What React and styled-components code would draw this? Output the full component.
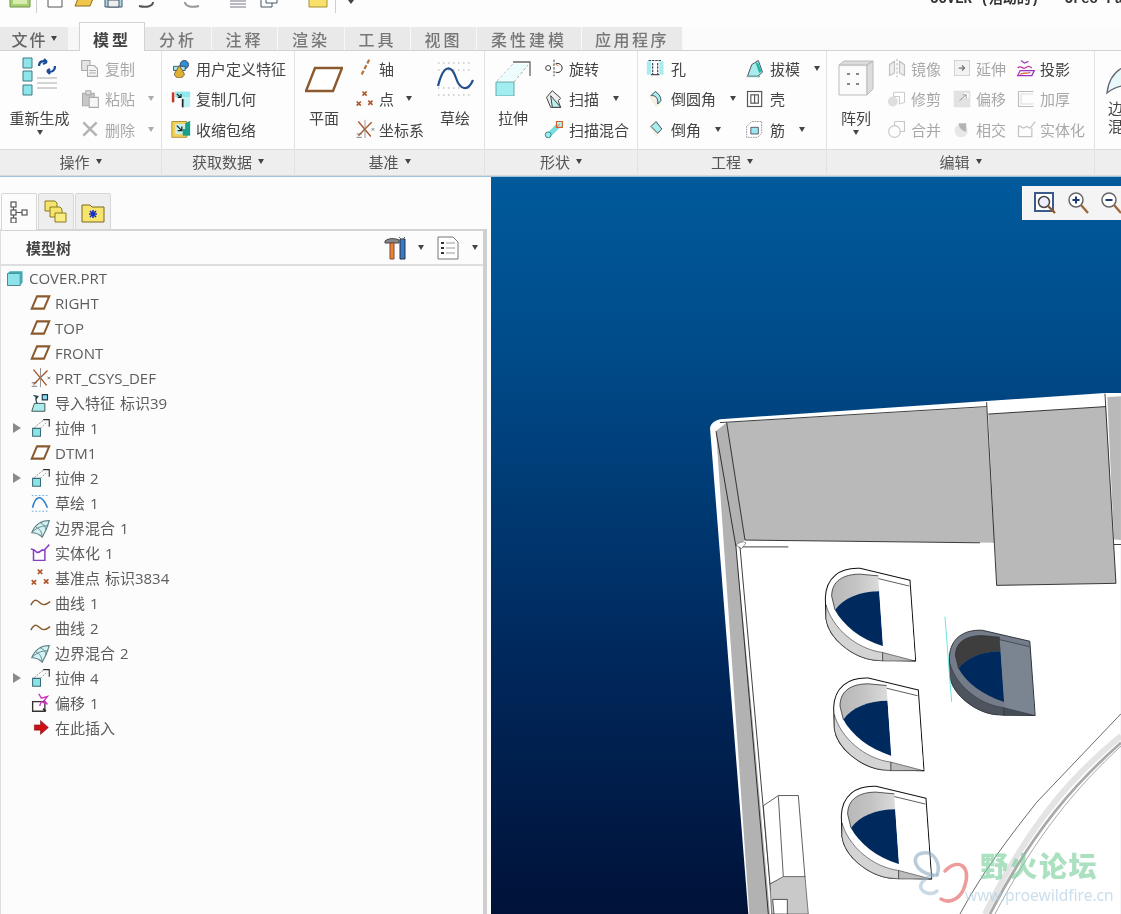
import React from 'react';
import styled, { createGlobalStyle } from 'styled-components';

const Global = createGlobalStyle`
  html, body { margin: 0; padding: 0; background: #fdfdfd; overflow: hidden; }
  body { font-family: "Noto Sans CJK SC", "Noto Sans", sans-serif; }
`;

const Page = styled.div`
  width: 1121px; height: 914px; overflow: hidden; display: flex; flex-direction: column;
  background: #fdfdfd; color: #444; filter: blur(0.45px);
`;

/* ---------- quick bar ---------- */
const QuickBar = styled.div`
  height: 27px; flex: none; display: flex; align-items: flex-start; overflow: hidden; position: relative;
`;
const QuickIcon = styled.svg`
  flex: none; width: ${p => p.$w}px; height: 22px; margin-top: -14px; margin-left: ${p => p.$ml}px;
`;
const QuickSep = styled.div`
  flex: none; width: 1px; height: 13px; background: #cfcfcf; margin-left: ${p => p.$ml}px;
`;
const Title = styled.div`
  margin-left: auto; margin-top: -12px; white-space: nowrap; font-size: 14px; line-height: 22px;
  font-weight: 700; color: #333; width: 191px; overflow: hidden; font-family: "Liberation Mono", "Noto Sans CJK SC", monospace;
`;
const QuickCaret = styled.span`
  flex: none; margin-left: 12px; width: 0; height: 0; margin-top: 0;
  border-left: 3px solid transparent; border-right: 3px solid transparent; border-top: 4px solid #444;
`;

/* ---------- tabs ---------- */
const TabBar = styled.div`
  height: 24px; box-sizing: border-box; flex: none; display: flex; align-items: stretch; background: #fbfbfb; border-bottom: 1px solid #d2d2d2;
`;
const FileTab = styled.div`
  width: 68px; flex: none; display: flex; align-items: center; justify-content: center; gap: 3px;
  background: #e9e9e9; font-size: 16px; font-weight: 500; color: #666; letter-spacing: 2px;
`;
const TabFill = styled.div`
  width: 11px; flex: none; background: #f7f7f7;
`;
const ActiveTab = styled.div`
  width: 66px; flex: none; margin-top: -5px; margin-bottom: -1px; background: #fdfdfd; border: 1px solid #d2d2d2; border-bottom: 0;
  box-sizing: border-box; display: flex; align-items: center; justify-content: center; padding-top: 3px;
  font-size: 16px; font-weight: 700; color: #444; letter-spacing: 3px; z-index: 2;
`;
const Tab = styled.div`
  width: ${p => p.$w}px; flex: none; box-sizing: border-box; background: #e9e9e9; border-right: 1px solid #f8f8f8;
  display: flex; align-items: center; justify-content: center; font-size: 16px; font-weight: 500; color: #777; letter-spacing: ${p => p.$ls}px;
`;

/* ---------- ribbon ---------- */
const Ribbon = styled.div`
  height: 125px; flex: none; display: flex; overflow: hidden;
`;
const Group = styled.div`
  flex: none; width: ${p => p.$w}px; display: flex; flex-direction: column; box-sizing: border-box;
  border-right: 1px solid #e2e2e2;
`;
const GroupBody = styled.div`
  height: 98px; flex: none; display: flex; padding: 2px 0 0 ${p => p.$pl}px; box-sizing: border-box; overflow: hidden;
`;
const GroupLabel = styled.div`
  height: 27px; flex: none; box-sizing: border-box; background: #eeeeee; border-top: 1px solid #dcdcdc; border-bottom: 1px solid #d8d8d8;
  display: flex; align-items: center; justify-content: center; gap: 6px; font-size: 15px; color: #555; padding-bottom: 3px;
`;
const Big = styled.div`
  width: ${p => p.$w}px; flex: none; margin-right: ${p => p.$mr}px; display: flex; flex-direction: column; align-items: center;
  font-size: 15px; line-height: 20px; color: #444;
`;
const BigIcon = styled.svg`
  width: ${p => p.$w}px; height: ${p => p.$h}px; margin-top: ${p => p.$mt}px; flex: none; display: block;
`;
const BigLabel = styled.div`
  white-space: nowrap; height: 22px; margin-top: ${p => p.$mt}px;
`;
const ClippedGroupText = styled.div`
  flex: none; width: 40px; padding-left: 3px; font-size: 15px; line-height: 18px; color: #444; margin-top: 4px;
`;
const ClippedBig = styled.div`
  width: 30px; flex: none; display: flex; flex-direction: column;
`;
const Col = styled.div`
  flex: none; width: ${p => p.$w}px; display: flex; flex-direction: column;
`;
const Row = styled.div`
  height: 30.5px; flex: none; display: flex; align-items: center; gap: ${p => p.$gap ?? 5}px; white-space: nowrap;
  font-size: 15px; color: ${p => p.$off ? '#a8a8a8' : '#444'};
`;
const Caret = styled.span`
  display: inline-block; flex: none; width: 0; height: 0;
  border-left: 3.5px solid transparent; border-right: 3.5px solid transparent;
  border-top: 5px solid ${p => p.$off ? '#aaa' : '#444'};
  margin-left: ${p => p.$ml ?? 0}px;
`;
const Ic = styled.svg`
  width: ${p => p.$s ?? 20}px; height: ${p => p.$s ?? 20}px; flex: none; display: block; margin-left: ${p => p.$ml ?? 0}px;
`;

/* ---------- main ---------- */
const Main = styled.div`
  flex: 1; display: flex; min-height: 0; border-top: 1px solid #9cc3dc;
`;
const Side = styled.aside`
  width: 491px; flex: none; background: #fcfcfc; padding-top: 16px; box-sizing: border-box; display: flex; flex-direction: column;
`;
const SideTabs = styled.div`
  display: flex; height: 37px; flex: none; padding-left: 1px; gap: 1px; margin-bottom: -1px; z-index: 1;
`;
const SideTab = styled.div`
  width: 36px; box-sizing: border-box; display: flex; align-items: center; justify-content: center;
  border: 1px solid #d6d6d6; border-radius: 2px 2px 0 0;
  background: ${p => p.$on ? '#fcfcfc' : '#eeeeee'};
  border-bottom: ${p => p.$on ? '0' : '1px solid #d6d6d6'};
`;
const TreePanel = styled.div`
  flex: 1; width: 487px; box-sizing: border-box; border-top: 2px solid #d4d4d4; border-left: 1px solid #dedede;
  border-right: 4px solid #cfcfcf; display: flex; flex-direction: column;
`;
const TreeHead = styled.div`
  height: 33px; flex: none; display: flex; align-items: center; padding: 0 5px 0 25px; border-bottom: 2px solid #dedede;
  font-size: 15px; font-weight: 700; color: #444;
`;
const HeadTools = styled.div`
  margin-left: auto; display: flex; align-items: center;
`;
const Tree = styled.div`
  margin-top: -1px; display: flex; flex-direction: column;
`;
const TreeRow = styled.div`
  height: 25px; display: flex; align-items: center; flex: none; white-space: nowrap;
  padding-left: ${p => p.$root ? 5 : 12}px; font-size: 15px; color: #5c5c5c;
  font-family: "Open Sans", "Noto Sans CJK SC", sans-serif; word-spacing: 1px;
`;
const Toggle = styled.span`
  width: 17px; flex: none; display: flex;
  &::before {
    content: ""; display: ${p => p.$show ? 'block' : 'none'}; width: 0; height: 0;
    border-top: 5px solid transparent; border-bottom: 5px solid transparent; border-left: 8px solid #8a8a8a;
  }
`;
const TreeText = styled.span`
  margin-left: ${p => p.$root ? 5 : 4}px;
`;

const Canvas = styled.main`
  flex: 1; position: relative; overflow: hidden; min-width: 0;
  background: linear-gradient(180deg, #005a9c 0%, #004a88 25%, #00285c 65%, #001238 100%);
`;
const Scene = styled.svg`
  width: 100%; height: 100%; display: block;
`;
const ViewBar = styled.div`
  position: absolute; top: 9px; left: 531px; width: 110px; height: 34px; background: #f4f4f4;
  display: flex; align-items: center; padding-left: 10px; gap: 9px; box-sizing: border-box; border-left: 1px solid #fff;
`;
const WatermarkCn = styled.div`
  position: absolute; left: 489px; top: 672px; font-family: "Noto Sans CJK SC", serif; font-size: 28px; font-weight: 900;
  line-height: 32px; letter-spacing: 1.5px; color: rgba(120, 205, 155, 0.62); white-space: nowrap;
`;
const WatermarkEn = styled.div`
  position: absolute; left: 474px; top: 707px; font-family: "Noto Sans", sans-serif; font-size: 15.5px; line-height: 22px;
  color: rgba(175, 205, 225, 0.65); white-space: nowrap;
`;
const Logo = styled.svg`
  position: absolute; left: 420px; top: 672px; width: 60px; height: 58px;
`;

/* ---------- icons ---------- */
const B = '#8a5a2e';
const P = {
  plane: <path d="M8 5H22L16 19H2Z" fill="#fff" stroke={B} strokeWidth="2.3" />,
  axis: <path d="M17 2L7 22" stroke="#b0703a" strokeWidth="2.6" strokeDasharray="5 2.5" fill="none" />,
  point: <g stroke="#b0562a" strokeWidth="2" fill="none"><path d="M9 3l5 5M14 3l-5 5M2 15l5 5M7 15l-5 5M16 14l5 5M21 14l-5 5" /></g>,
  csys: <g fill="none"><path d="M4 3L19 21M20 4L4 20" stroke="#a8552a" strokeWidth="1.6" /><path d="M12 1V23" stroke="#888" strokeWidth="1" /><path d="M20 11l3 3M23 11l-3 3M2 18h6M2 22h6" stroke="#666" strokeWidth="1" /></g>,
  userfeat: <g><circle cx="16" cy="8" r="5" fill="#2f8fd8" stroke="#234" /><path d="M3 10h14v5H3z" fill="#9fe6ea" stroke="#345" /><path d="M10 9l-6 10a6 5 0 0 0 12 0z" fill="#e0b030" stroke="#654" /></g>,
  copygeo: <g><path d="M5 3h18v7H5z" fill="#8fe8ea" /><path d="M13 10h10v12H13z" fill="#b8f2f2" /><path d="M1 4h3v12H1z" fill="#c0392b" /><path d="M7 6l5 4m0-4v4H8" stroke="#222" strokeWidth="1.4" fill="none" /><path d="M14 12v10" stroke="#222" strokeWidth="2" /></g>,
  shrink: <g><path d="M1 3h18v19H1z" fill="#f2d060" stroke="#a88320" /><path d="M5 6h12v12H5z" fill="#c8f0e8" /><path d="M17 5l6-3v10h-6z" fill="#1aa08a" /><path d="M14 12h9v8h-9z" fill="#1aa08a" /><path d="M7 8l6 6m0-5v5H8" stroke="#222" strokeWidth="1.5" fill="none" /></g>,
  copy: <g fill="none" stroke="#aaa" strokeWidth="1.3"><path d="M2 3h10v12H2z" fill="#e4e4e4" /><path d="M9 9h8l4 4v9H9z" fill="#f4f4f4" /><path d="M11 15h8M11 18h8" /></g>,
  paste: <g stroke="#aaa" strokeWidth="1.3"><path d="M3 5h14v15H3z" fill="#c8c8c8" /><path d="M7 2h6v5H7z" fill="#ddd" /><path d="M11 10h11v12H11z" fill="#f6f6f6" /></g>,
  del: <path d="M4 4L20 20M20 4L4 20" stroke="#b4b4b4" strokeWidth="3" fill="none" />,
  rotate: <g fill="none" stroke="#444" strokeWidth="1.2"><path d="M12 2v20" strokeDasharray="3 1.5" /><circle cx="5" cy="12" r="3" /><path d="M14 7a5.5 5.5 0 1 1 0 10" stroke="#333" /><path d="M14 7l3 3" stroke="#e06a2c" /></g>,
  sweep: <g stroke="#444" strokeWidth="1.2"><path d="M3 10L10 2l10 9-3 3 3 8H8z" fill="#eee" /><path d="M8 8l12 14H10z" fill="#b8f0ee" /></g>,
  sblend: <g><path d="M5 20L18 7" stroke="#7dd" strokeWidth="6" /><circle cx="5" cy="19" r="3.5" fill="#9ee" stroke="#277" /><path d="M15 3h7v7h-7z" fill="#b8f2f2" stroke="#d0602a" strokeWidth="1.4" /><path d="M15 10l4-4" stroke="#d0602a" /></g>,
  hole: <g><path d="M1 4h20v16H1z" fill="#a8ecf0" /><path d="M6 4h10v16H6z" fill="#fff" /><path d="M8 6v14M14 6v14M3 3h16" stroke="#445" strokeWidth="1.4" strokeDasharray="3 1" fill="none" /><path d="M6 20h10" stroke="#445" strokeWidth="1.4" /></g>,
  round: <g><path d="M3 8l8-5c6 3 8 9 7 15l-6 4z" fill="#f4efe2" /><path d="M6 8c5-1 9 3 8 10l4-4c0-5-3-9-7-11z" fill="#a8ecec" stroke="#345" strokeWidth="1.1" /></g>,
  chamfer: <g><path d="M3 9l8-6 8 9-6 10z" fill="#f4efe2" /><path d="M6 9l6-6 7 9-5 5z" fill="#a8ecec" stroke="#345" strokeWidth="1.1" /></g>,
  draft: <g><path d="M3 22L8 8l8-5 5 14-6 5z" fill="#a8ecec" stroke="#445" strokeWidth="1.1" /><path d="M12 4l4 3 4 9-3 2z" fill="#22b4a8" /><path d="M2 22h16" stroke="#7aa" strokeWidth="2" /></g>,
  shell: <g fill="none" stroke="#555" strokeWidth="1.4"><rect x="3" y="3" width="17" height="18" /><rect x="7" y="7" width="9" height="10" /><path d="M11.5 7v10" /></g>,
  rib: <g><path d="M2 9l6-6h12v14l-5 5H2z" fill="#fff" stroke="#888" strokeDasharray="2 1" /><path d="M7 10h9v8H7z" fill="#9ce8ee" stroke="#445" /></g>,
  mirror: <g fill="none" stroke="#c0c0c0" strokeWidth="1.4"><path d="M12 1v22" strokeDasharray="3 2" /><path d="M9 4L3 8v13l6-3zM15 4l6 4v13l-6-3z" fill="#eee" /></g>,
  extend: <g><rect x="3" y="3" width="18" height="18" fill="#f2f2f2" stroke="#ccc" /><path d="M8 12h7m-3-3l3 3-3 3" stroke="#777" strokeWidth="1.5" fill="none" /></g>,
  project: <g fill="none" strokeWidth="1.5"><path d="M6 3l4 3 5-2" stroke="#a040c0" /><path d="M2 12c4-4 6 2 9 0s4-3 8 0" stroke="#c030a0" /><path d="M5 15h17l-3 6H2z" stroke="#a030c0" /><path d="M5 20c4-4 7 0 12-3" stroke="#d06030" /></g>,
  trim: <g><circle cx="7" cy="15" r="6" fill="#dedede" /><path d="M8 4h13v12l-6 2V9H8z" fill="#fff" stroke="#c0c0c0" /></g>,
  offset: <g><rect x="2" y="2" width="20" height="20" fill="#e2e2e2" /><path d="M14 5h6v6h-6z" fill="#fff" /><path d="M9 14l8-7m0 4V7h-4" stroke="#888" fill="none" /></g>,
  thick: <g fill="none" stroke="#bcbcbc" strokeWidth="1.3"><path d="M3 3h18M3 3v18h18" /><path d="M6 6h15M6 6v12h15" stroke="#ddd" /></g>,
  merge: <g fill="none" stroke="#c8c8c8" strokeWidth="1.4"><circle cx="9" cy="15" r="7" /><path d="M9 3h12v12h-6" /><path d="M9 3v5" /></g>,
  inter: <g><circle cx="11" cy="14" r="8" fill="#e8e8e8" /><path d="M8 5h9v10c-4 0-9-4-9-10z" fill="#b4b4b4" /></g>,
  solidify: <g fill="none" stroke="#c4c4c4" strokeWidth="1.5"><path d="M3 8l6 3 4-2 4 2 6-8M3 8v13h16V11" /></g>,
  solidifyOn: <g fill="none" stroke="#8a3fc0" strokeWidth="1.7"><path d="M1 8c3 0 5 2 7 4 3 0 5-2 6-3 2 2 4-2 8-6" /><path d="M4 8v13h13V9" /></g>,
  importf: <g><path d="M5 13h12v9H2z" fill="#a8ecec" stroke="#344" /><path d="M14 3h6v6h-6zM4 4l5 1-2 3M7 5c-1 4 0 6 1 8" fill="#8de" stroke="#234" strokeWidth="1.3" /></g>,
  extrude: <g fill="none"><path d="M3 13h9v9H3z" fill="#8be4e6" stroke="#3a6a78" strokeWidth="1.2" /><path d="M5 12L16 3" stroke="#777" strokeDasharray="2 1.5" /><path d="M15 3h7v8" stroke="#333" strokeWidth="1.3" /><path d="M12 13l7-7" stroke="#999" strokeDasharray="2 1.5" /></g>,
  skt: <g><path d="M3 18c3-14 9-14 14-6l3 6" fill="none" stroke="#2f7fd0" strokeWidth="1.8" /><path d="M2 4h20M2 22h20" stroke="#6aa8e0" strokeDasharray="2 2" /></g>,
  bblend: <g><path d="M2 18C6 8 12 4 22 4c-2 8-5 14-8 19-3-3-7-5-12-5z" fill="#d2f3f2" stroke="#5c7c84" strokeWidth="1.2" /><path d="M7 12c4 1 6 4 7 11M12 7c3 1 6 3 6 8M3 17c6-6 12-7 18-7" fill="none" stroke="#5c7c84" /></g>,
  curve: <path d="M1 15c4-8 7-6 10-3s6 4 12-1" fill="none" stroke="#8a5a2e" strokeWidth="1.7" />,
  off: <g fill="none"><path d="M3 11h14v11H3z" stroke="#333" strokeWidth="1.5" /><path d="M10 2l3 5 7-2-4 5 4 4-7-3-2 5" stroke="#d030c0" strokeWidth="1.5" /><path d="M15 19l3 3" stroke="#222" strokeWidth="2" /></g>,
  insert: <path d="M5 9h7V4l9 8-9 8v-5H5z" fill="#cc1018" stroke="#7a0a10" strokeWidth=".6" />,
  part: <g><path d="M2 6h17v16H2z" fill="#8ee2ea" stroke="#3e7a88" strokeWidth="1.2" /><path d="M2 6l3-3h17v15l-3 4V6z" fill="#3fa9b0" /></g>,
};
const I = ({ n, s = 20 }) => <Ic $s={s} viewBox="0 0 24 24">{P[n]}</Ic>;

const SmallBtn = ({ n, t, off, caret, cm = 8, gap }) => (
  <Row $off={off} $gap={gap}><I n={n} />{t}{caret && <Caret $off={off} $ml={cm} />}</Row>
);

const RibbonGroup = ({ w, pl, label, children }) => (
  <Group $w={w}>
    <GroupBody $pl={pl}>{children}</GroupBody>
    <GroupLabel>{label}{label && <Caret />}</GroupLabel>
  </Group>
);

const tree = [
  ['plane', 'RIGHT'], ['plane', 'TOP'], ['plane', 'FRONT'], ['csys', 'PRT_CSYS_DEF'], ['importf', '导入特征 标识39'],
  ['extrude', '拉伸 1', 1], ['plane', 'DTM1'], ['extrude', '拉伸 2', 1], ['skt', '草绘 1'], ['bblend', '边界混合 1'],
  ['solidifyOn', '实体化 1'], ['point', '基准点 标识3834'], ['curve', '曲线 1'], ['curve', '曲线 2'], ['bblend', '边界混合 2'],
  ['extrude', '拉伸 4', 1], ['off', '偏移 1'], ['insert', '在此插入'],
];

const Hole = ({ tf, dark }) => {
  const c = dark
    ? { band: '#4d545e', inner: '#3e3e3e', right: '#7b8592', tri: '#454c55', line: '#2b2f35', rim: '#737c88' }
    : { band: '#d4d4d4', inner: 'url(#wallG)', right: '#fff', tri: '#bdbdbd', line: '#111', rim: '#fff' };
  return (
    <g transform={tf}>
      <path d="M630 588L480 553C420 550 378 580 376 640L378 700C385 760 460 815 520 822L647 825Z" fill={c.rim} stroke={c.line} strokeWidth="3" />
      <path d="M378 660C398 730 470 790 548 800V825L520 822C460 815 385 760 378 700Z" fill={c.band} stroke={c.line} strokeWidth="1.5" />
      <path d="M535 575L480 570C430 570 395 590 395 635L405 675C430 640 480 620 540 620Z" fill={c.inner} />
      <path d="M535 575L480 570C430 570 395 590 395 635L405 675" fill="none" stroke={c.line} strokeWidth="2" />
      <path d="M405 675C430 640 480 620 538 620L550 782C480 760 430 720 405 675Z" fill="#002a5e" />
      <path d="M535 583L628 605L645 823L550 800Z" fill={c.right} />
      <path d="M535 583L628 605" fill="none" stroke={c.line} strokeWidth="2" />
      <path d="M548 800L645 825H548Z" fill={c.tri} stroke={c.line} strokeWidth="1.5" />
    </g>
  );
};

export default function App() {
  return (
    <Page>
      <Global />
      <QuickBar>
        <QuickIcon $w={22} $ml={9} viewBox="0 0 22 22"><path d="M1 1h20v20H1z" fill="#a6cf72" stroke="#6f9445" /><path d="M4 4h14v14H4z" fill="#d8ecb0" /></QuickIcon>
        <QuickSep $ml={5} />
        <QuickIcon $w={16} $ml={10} viewBox="0 0 16 22"><path d="M1 0h14v21H1z" fill="#fff" stroke="#555" /></QuickIcon>
        <QuickIcon $w={22} $ml={11} viewBox="0 0 22 22"><path d="M1 20L6 8h15l-5 12z" fill="#f2c54c" stroke="#8a6a1c" /></QuickIcon>
        <QuickIcon $w={19} $ml={8} viewBox="0 0 19 22"><path d="M1 1h17v20H1z" fill="#a8dde8" stroke="#456" /><path d="M4 14h11v7H4z" fill="#eee" stroke="#456" /></QuickIcon>
        <QuickIcon $w={20} $ml={13} viewBox="0 0 20 22"><path d="M3 20c8 2 14 0 14-4" fill="none" stroke="#555" strokeWidth="2" /></QuickIcon>
        <QuickIcon $w={22} $ml={23} viewBox="0 0 22 22"><path d="M20 20c-8 2-14 0-14-4" fill="none" stroke="#999" strokeWidth="2" /></QuickIcon>
        <QuickIcon $w={18} $ml={28} viewBox="0 0 18 22"><path d="M1 15h16M1 18h16M1 21h16" stroke="#778" /><path d="M2 10h5v4H2z" fill="#8be4e6" /></QuickIcon>
        <QuickIcon $w={18} $ml={13} viewBox="0 0 18 22"><path d="M1 12h11v9H1z" fill="#fff" stroke="#456" /><path d="M6 8h11v9H6z" fill="#fff" stroke="#456" /></QuickIcon>
        <QuickIcon $w={20} $ml={30} viewBox="0 0 20 22"><path d="M1 1h18v20H1z" fill="#f8e06a" stroke="#a89030" /></QuickIcon>
        <QuickSep $ml={7} />
        <QuickCaret />
        <Title>COVER (活动的) - Creo Parametric</Title>
      </QuickBar>

      <TabBar>
        <FileTab>文件<Caret /></FileTab>
        <TabFill />
        <ActiveTab>模型</ActiveTab>
        <Tab $w={67} $ls={3}>分析</Tab>
        <Tab $w={66} $ls={3}>注释</Tab>
        <Tab $w={67} $ls={3}>渲染</Tab>
        <Tab $w={66} $ls={3}>工具</Tab>
        <Tab $w={66} $ls={3}>视图</Tab>
        <Tab $w={105} $ls={3}>柔性建模</Tab>
        <Tab $w={101} $ls={2.5}>应用程序</Tab>
      </TabBar>

      <Ribbon>
        <RibbonGroup w={162} pl={9} label="操作">
          <Big $w={61} $mr={10}>
            <BigIcon $w={36} $h={40} $mt={4} viewBox="0 0 36 40">
              <path d="M1 1h9v10H1zM1 14h9v10H1zM1 28h9v10H1z" fill="#8ee6ea" stroke="#3c7a84" />
              <path d="M17 9c0-5 5-6 8-4m0 0l-3-3m3 3l-4 2M33 9c0 5-4 7-8 5m0 0l3 3m-3-3l3-2" fill="none" stroke="#1a4a98" strokeWidth="2.2" />
              <path d="M15 21h20M15 26h20M15 31h20" stroke="#aaa" />
            </BigIcon>
            <BigLabel $mt={11}>重新生成</BigLabel>
            <Caret />
          </Big>
          <Col $w={80}>
            <SmallBtn n="copy" t="复制" off />
            <SmallBtn n="paste" t="粘贴" off caret />
            <SmallBtn n="del" t="删除" off caret />
          </Col>
        </RibbonGroup>
        <RibbonGroup w={133} pl={9} label="获取数据">
          <Col $w={122}>
            <SmallBtn n="userfeat" t="用户定义特征" />
            <SmallBtn n="copygeo" t="复制几何" />
            <SmallBtn n="shrink" t="收缩包络" />
          </Col>
        </RibbonGroup>
        <RibbonGroup w={190} pl={10} label="基准">
          <Big $w={38} $mr={12}>
            <BigIcon $w={38} $h={27} $mt={13} viewBox="0 0 38 27"><path d="M10 2H37L28 25H1Z" fill="#fff" stroke={B} strokeWidth="2.4" /></BigIcon>
            <BigLabel $mt={15}>平面</BigLabel>
          </Big>
          <Col $w={81}>
            <SmallBtn n="axis" t="轴" gap={4} />
            <SmallBtn n="point" t="点" caret gap={4} />
            <SmallBtn n="csys" t="坐标系" gap={4} />
          </Col>
          <Big $w={38}>
            <BigIcon $w={38} $h={38} $mt={7} viewBox="0 0 38 38">
              <path d="M2 3h34M2 10h34M2 28h34M2 35h34" stroke="#aaa" strokeDasharray="1.5 3.5" />
              <path d="M2 26C8 2 16 6 20 18s12 14 17 2" fill="none" stroke="#22508c" strokeWidth="2.2" />
            </BigIcon>
            <BigLabel $mt={10}>草绘</BigLabel>
          </Big>
        </RibbonGroup>
        <RibbonGroup w={153} pl={10} label="形状">
          <Big $w={36} $mr={13}>
            <BigIcon $w={36} $h={36} $mt={7} viewBox="0 0 36 36">
              <path d="M1 22h18v14H1z" fill="#a0eef0" stroke="#6aa" />
              <path d="M2 21L18 4M19 22L33 5" stroke="#aaa" strokeDasharray="3 2" fill="none" />
              <path d="M18 2h17v14" fill="none" stroke="#666" strokeWidth="1.3" />
              <path d="M18 4h15L19 21H2z" fill="#e6fbfb" opacity=".7" />
            </BigIcon>
            <BigLabel $mt={12}>拉伸</BigLabel>
          </Big>
          <Col $w={92}>
            <SmallBtn n="rotate" t="旋转" />
            <SmallBtn n="sweep" t="扫描" caret cm={9} />
            <SmallBtn n="sblend" t="扫描混合" />
          </Col>
        </RibbonGroup>
        <RibbonGroup w={189} pl={8} label="工程">
          <Col $w={99}>
            <SmallBtn n="hole" t="孔" />
            <SmallBtn n="round" t="倒圆角" caret cm={9} />
            <SmallBtn n="chamfer" t="倒角" caret cm={9} />
          </Col>
          <Col $w={80}>
            <SmallBtn n="draft" t="拔模" caret cm={9} />
            <SmallBtn n="shell" t="壳" />
            <SmallBtn n="rib" t="筋" caret cm={9} />
          </Col>
        </RibbonGroup>
        <RibbonGroup w={268} pl={11} label="编辑">
          <Big $w={36} $mr={13}>
            <BigIcon $w={36} $h={36} $mt={7} viewBox="0 0 36 36">
              <path d="M1 5h28v30H1z" fill="#fbfbfb" stroke="#bbb" />
              <path d="M1 5l5-4h29L29 5zM29 5l6-4v28l-6 6z" fill="#dcdcdc" stroke="#bbb" />
              <path d="M9 14h3M18 14h3M9 24h3M18 24h3" stroke="#888" strokeWidth="2" />
            </BigIcon>
            <BigLabel $mt={12}>阵列</BigLabel>
            <Caret />
          </Big>
          <Col $w={65}>
            <SmallBtn n="mirror" t="镜像" off gap={4} />
            <SmallBtn n="trim" t="修剪" off gap={4} />
            <SmallBtn n="merge" t="合并" off gap={4} />
          </Col>
          <Col $w={64}>
            <SmallBtn n="extend" t="延伸" off gap={4} />
            <SmallBtn n="offset" t="偏移" off gap={4} />
            <SmallBtn n="inter" t="相交" off gap={4} />
          </Col>
          <Col $w={78}>
            <Row $gap={4}><I n="project" />投影</Row>
            <SmallBtn n="thick" t="加厚" off gap={4} />
            <SmallBtn n="solidify" t="实体化" off gap={4} />
          </Col>
        </RibbonGroup>
        <RibbonGroup w={40} pl={10} label="">
          <ClippedBig>
            <BigIcon $w={36} $h={36} $mt={6} viewBox="0 0 36 36">
              <path d="M2 34C4 16 14 6 34 4v26C24 24 12 26 2 34z" fill="#e8f8f8" stroke="#667" strokeWidth="1.3" />
            </BigIcon>
            <ClippedGroupText>边界<br />混合</ClippedGroupText>
          </ClippedBig>
        </RibbonGroup>
      </Ribbon>

      <Main>
        <Side>
          <SideTabs>
            <SideTab $on>
              <Ic $s={22} viewBox="0 0 22 22"><g fill="#fff" stroke="#555" strokeWidth="1.2"><rect x="3" y="1" width="5" height="5" /><rect x="3" y="9" width="5" height="5" /><rect x="3" y="17" width="5" height="5" /><rect x="14" y="9" width="5" height="5" /><path d="M5.5 6v3M5.5 14v3M8 11.5h6" /></g></Ic>
            </SideTab>
            <SideTab>
              <Ic $s={26} viewBox="0 0 26 26"><g stroke="#8a7a20" strokeWidth="1"><path d="M2 2h10l2 2v8H2z" fill="#f6e36e" /><path d="M7 8h10l2 2v8H7z" fill="#f6e36e" /><path d="M12 14h11v9H12z" fill="#faec80" /></g></Ic>
            </SideTab>
            <SideTab>
              <Ic $s={26} viewBox="0 0 26 26"><path d="M2 6h8l2 2h12v15H2z" fill="#f6e46e" stroke="#7a6a20" /><path d="M13 11v8M9 15h8M10 12l6 6M16 12l-6 6" stroke="#1a30c0" strokeWidth="1.6" /></Ic>
            </SideTab>
          </SideTabs>
          <TreePanel>
            <TreeHead>
              模型树
              <HeadTools>
                <Ic $s={26} viewBox="0 0 26 26"><path d="M2 6c4-3 9-3 14-1v3H2z" fill="#888" stroke="#444" /><path d="M7 8h4v16H7z" fill="#e8862a" stroke="#844" /><path d="M17 4h5v20h-5z" fill="#3a78c8" stroke="#234" /><path d="M16 2l3 3 3-3" stroke="#666" fill="none" /></Ic>
                <Caret $ml={9} />
                <Ic $s={24} $ml={12} viewBox="0 0 24 24"><path d="M2 1h15l5 5v17H2z" fill="#fff" stroke="#777" /><path d="M5 7h3M5 12h3M5 17h3" stroke="#333" strokeWidth="2" /><path d="M10 7h9M10 12h9M10 17h9" stroke="#999" /></Ic>
                <Caret $ml={12} />
              </HeadTools>
            </TreeHead>
            <Tree>
              <TreeRow $root><I n="part" s={18} /><TreeText $root>COVER.PRT</TreeText></TreeRow>
              {tree.map(([n, t, tg], i) => (
                <TreeRow key={i}>
                  <Toggle $show={!!tg} /><I n={n} s={21} /><TreeText>{t}</TreeText>
                </TreeRow>
              ))}
            </Tree>
          </TreePanel>
        </Side>
        <Canvas>
          <Scene viewBox="0 0 630 737" preserveAspectRatio="none">
            <defs>
              <linearGradient id="wallG" x1="0" x2="1"><stop offset="0" stopColor="#b8b8b8" /><stop offset=".5" stopColor="#c4c4c4" /><stop offset="1" stopColor="#dcdcdc" /></linearGradient>
            </defs>
            <g transform="translate(209,203) scale(.3333,.3406)">
              <path d="M30 140Q35 120 60 115L860 62L1215 38L1263 38V1568H145Z" fill="#fff" />
              <path d="M80 125L860 80L885 478L135 470Z" fill="#b9b9b9" />
              <path d="M48 150L80 125L135 470L108 490L215 1568H148Z" fill="#b2b2b2" />
              <path d="M118 500L215 1568H210L112 492Z" fill="#fff" />
              <path d="M865 100L1218 78L1248 597L890 603Z" fill="#b9b9b9" />
              <path d="M1222 50L1263 48V470L1242 468Z" fill="#b9b9b9" />
              <g fill="none" stroke="#111" strokeWidth="2.4">
                <path d="M60 125L860 78M865 100L1218 78" />
                <path d="M860 65L890 603L1248 597L1215 40" />
                <path d="M48 150L108 490L205 1568M80 125L135 470" />
                <path d="M120 490L212 1500M135 470L840 478M115 490L265 490" />
                <path d="M1242 483H1263" />
              </g>
              <path d="M108 485Q125 470 138 478L125 495Z" fill="#fff" stroke="#333" strokeWidth="1.5" />

              <path d="M190 1250L235 1220H295L315 1460H250L210 1480Z" fill="#fff" stroke="#111" strokeWidth="2" />
              <path d="M235 1222L250 1458" stroke="#111" strokeWidth="2" />
              <path d="M210 1480L250 1458H315L325 1568H215Z" fill="#c9c9c9" stroke="#111" strokeWidth="1.5" />
              <path d="M218 1525H262V1568H222Z" fill="#fff" stroke="#111" strokeWidth="2" />

              <path d="M1263 1045C1120 1160 990 1300 855 1568" fill="none" stroke="#ddd" strokeWidth="18" opacity=".8" />
              <path d="M1263 1065C1130 1180 1000 1320 870 1568" fill="none" stroke="#a9a9a9" strokeWidth="8" />
              <path d="M1263 1075C1130 1195 1010 1335 885 1568" fill="none" stroke="#555" strokeWidth="1.5" />
              <path d="M1263 980L1010 1240C930 1340 850 1440 780 1568" fill="none" stroke="#222" strokeWidth="2" />

              <Hole tf="translate(0,0)" />
              <Hole tf="translate(25,322)" />
              <Hole tf="translate(48,640)" />
              <Hole tf="translate(391,226) scale(.95,.92)" dark />
              <path d="M735 695L755 945" stroke="#4ee0dc" strokeWidth="2.5" />
            </g>
          </Scene>
          <ViewBar>
            <Ic $s={24} viewBox="0 0 24 24"><rect x="2" y="2" width="18" height="18" fill="#fff" stroke="#3a5a8a" strokeWidth="2" /><circle cx="11" cy="11" r="5.5" fill="#eef" stroke="#444" strokeWidth="1.5" /><path d="M15 15l7 7" stroke="#8a5a2e" strokeWidth="2.4" /></Ic>
            <Ic $s={24} viewBox="0 0 24 24"><circle cx="10" cy="9" r="7" fill="#fff" stroke="#666" strokeWidth="1.5" /><path d="M10 5.5v7M6.5 9h7" stroke="#1a3a70" strokeWidth="2" /><path d="M15 14l7 8" stroke="#a0683a" strokeWidth="2.4" /></Ic>
            <Ic $s={24} viewBox="0 0 24 24"><circle cx="10" cy="9" r="7" fill="#fff" stroke="#666" strokeWidth="1.5" /><path d="M6.5 9h7" stroke="#1a3a70" strokeWidth="2" /><path d="M15 14l7 8" stroke="#a0683a" strokeWidth="2.4" /></Ic>
          </ViewBar>
          <Logo viewBox="0 0 60 58">
            <g fill="none" strokeWidth="3.5" strokeLinecap="round">
              <path d="M22 26C4 24-2 6 12 4c12-2 18 12 14 22" stroke="rgba(130,160,185,.55)" />
              <path d="M26 26C10 28 4 40 16 44c4 1 8 0 10-2" stroke="rgba(150,180,200,.5)" />
              <path d="M34 22C48 8 60 18 54 36c-3 12-14 20-24 14" stroke="rgba(235,130,130,.8)" />
            </g>
          </Logo>
          <WatermarkCn>野火论坛</WatermarkCn>
          <WatermarkEn>www.proewildfire.cn</WatermarkEn>
        </Canvas>
      </Main>
    </Page>
  );
}
